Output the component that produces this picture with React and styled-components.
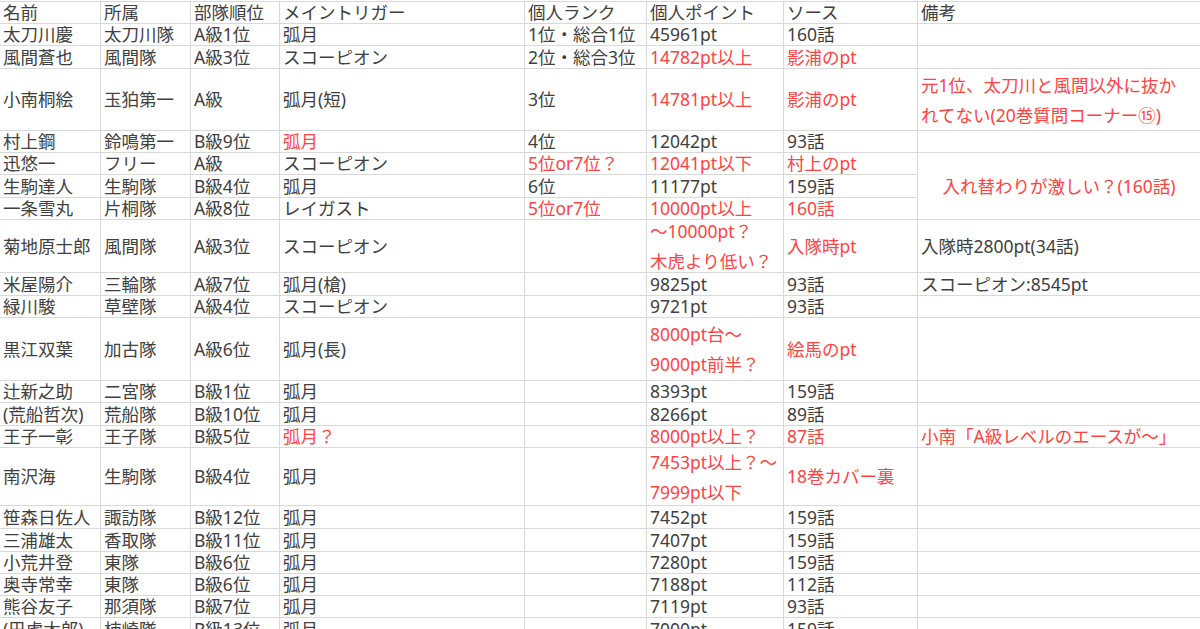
import styled, { createGlobalStyle } from "styled-components";

const GlobalStyle = createGlobalStyle`
  html, body {
    margin: 0;
    padding: 0;
    background: #ffffff;
    overflow: hidden;
  }
  body {
    font-family: "Noto Sans", "Noto Sans CJK JP", sans-serif;
  }
`;

const R = (t) => ({ t, red: true });

const columns = [100, 89, 88, 244, 121, 136, 133];

const rows = [
  { h: 21, cells: ["名前", "所属", "部隊順位", "メイントリガー", "個人ランク", "個人ポイント", "ソース", "備考"] },
  { h: 21, cells: ["太刀川慶", "太刀川隊", "A級1位", "弧月", "1位・総合1位", "45961pt", "160話", ""] },
  { h: 22, cells: ["風間蒼也", "風間隊", "A級3位", "スコーピオン", "2位・総合3位", R("14782pt以上"), R("影浦のpt"), ""] },
  {
    h: 61,
    cells: ["小南桐絵", "玉狛第一", "A級", "弧月(短)", "3位", R("14781pt以上"), R("影浦のpt"),
      R("元1位、太刀川と風間以外に抜か\nれてない(20巻質問コーナー⑮)")],
  },
  { h: 21, cells: ["村上鋼", "鈴鳴第一", "B級9位", R("弧月"), "4位", "12042pt", "93話", ""] },
  {
    h: 21,
    cells: ["迅悠一", "フリー", "A級", "スコーピオン", R("5位or7位？"), R("12041pt以下"), R("村上のpt"),
      { t: "入れ替わりが激しい？(160話)", red: true, span: 3, center: true }],
  },
  { h: 22, cells: ["生駒達人", "生駒隊", "B級4位", "弧月", "6位", "11177pt", "159話"] },
  { h: 21, cells: ["一条雪丸", "片桐隊", "A級8位", "レイガスト", R("5位or7位"), R("10000pt以上"), R("160話")] },
  {
    h: 52,
    cells: ["菊地原士郎", "風間隊", "A級3位", "スコーピオン", "", R("～10000pt？\n木虎より低い？"), R("入隊時pt"),
      "入隊時2800pt(34話)"],
  },
  { h: 22, cells: ["米屋陽介", "三輪隊", "A級7位", "弧月(槍)", "", "9825pt", "93話", "スコーピオン:8545pt"] },
  { h: 21, cells: ["緑川駿", "草壁隊", "A級4位", "スコーピオン", "", "9721pt", "93話", ""] },
  {
    h: 62,
    cells: ["黒江双葉", "加古隊", "A級6位", "弧月(長)", "", R("8000pt台～\n9000pt前半？"), R("絵馬のpt"), ""],
  },
  { h: 21, cells: ["辻新之助", "二宮隊", "B級1位", "弧月", "", "8393pt", "159話", ""] },
  { h: 22, cells: ["(荒船哲次)", "荒船隊", "B級10位", "弧月", "", "8266pt", "89話", ""] },
  {
    h: 21,
    cells: ["王子一彰", "王子隊", "B級5位", R("弧月？"), "", R("8000pt以上？"), R("87話"),
      R("小南「A級レベルのエースが～」")],
  },
  {
    h: 57,
    cells: ["南沢海", "生駒隊", "B級4位", "弧月", "", R("7453pt以上？～\n7999pt以下"), R("18巻カバー裏"), ""],
  },
  { h: 22, cells: ["笹森日佐人", "諏訪隊", "B級12位", "弧月", "", "7452pt", "159話", ""] },
  { h: 22, cells: ["三浦雄太", "香取隊", "B級11位", "弧月", "", "7407pt", "159話", ""] },
  { h: 21, cells: ["小荒井登", "東隊", "B級6位", "弧月", "", "7280pt", "159話", ""] },
  { h: 21, cells: ["奥寺常幸", "東隊", "B級6位", "弧月", "", "7188pt", "112話", ""] },
  { h: 21, cells: ["熊谷友子", "那須隊", "B級7位", "弧月", "", "7119pt", "93話", ""] },
  { h: 22, cells: ["(巴虎太郎)", "柿崎隊", "B級13位", "弧月", "", "7000pt", "159話", ""] },
];

export default function App() {
  return (
    <>
      <GlobalStyle />
      <Sheet>
        <Grid $cols={columns} $rows={rows.map((r) => r.h)}>
          {rows.map((row, ri) =>
            row.cells.map((c, ci) => {
              const cell = typeof c === "string" ? { t: c } : c;
              const multi = cell.t.includes("\n");
              return (
                <Cell
                  key={`${ri}-${ci}`}
                  $red={cell.red}
                  $span={cell.span}
                  $center={cell.center}
                  $multi={multi}
                >
                  <span>{cell.t}</span>
                </Cell>
              );
            })
          )}
        </Grid>
      </Sheet>
    </>
  );
}

const Sheet = styled.div`
  width: 1200px;
  height: 629px;
  overflow: hidden;
  padding-top: 1px;
  box-sizing: border-box;
  background: #ffffff;
`;

const Grid = styled.div`
  display: grid;
  grid-template-columns: ${({ $cols }) => $cols.map((w) => `${w}px`).join(" ")} 1fr;
  grid-template-rows: ${({ $rows }) => $rows.map((h) => `${h}px`).join(" ")};
  gap: 1px;
  padding-top: 1px;
  background: #d9d9d9;
`;

const Cell = styled.div`
  background: #ffffff;
  display: flex;
  align-items: center;
  justify-content: ${({ $center }) => ($center ? "center" : "flex-start")};
  padding: 0 3px;
  overflow: visible;
  min-width: 0;
  font-size: 17.5px;
  line-height: ${({ $multi }) => ($multi ? "30px" : "21px")};
  white-space: ${({ $multi }) => ($multi ? "pre" : "nowrap")};
  color: ${({ $red }) => ($red ? "#ff4242" : "#404040")};
  grid-row: ${({ $span }) => ($span ? `span ${$span}` : "auto")};
  & > span {
    position: relative;
    z-index: 1;
  }
`;
